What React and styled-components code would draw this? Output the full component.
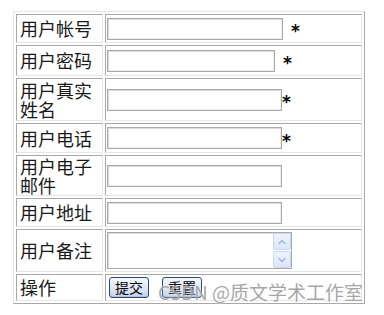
import React from "react";
import styled, { createGlobalStyle } from "styled-components";
import { ChevronUp, ChevronDown } from "lucide-react";

const GlobalStyle = createGlobalStyle`
  html, body { margin: 0; padding: 0; background: #ffffff; }
  * { box-sizing: border-box; }
`;

const Page = styled.div`
  position: relative;
  width: 384px;
  height: 315px;
  padding: 11px 0 0 13px;
  overflow: hidden;
  font-family: "Noto Sans CJK SC", "Noto Sans", sans-serif;
`;

const FormGrid = styled.div`
  display: grid;
  grid-template-columns: 87px 257px;
  grid-template-rows: 29px 31px 43px 30px 41px 29px 43px 27px;
  gap: 2px;
  padding: 2px;
  width: fit-content;
  border: 1px solid;
  border-color: #e6e6e6 #a8a8a8 #a8a8a8 #e6e6e6;
`;

const Cell = styled.div`
  border: 1px solid;
  border-color: #a8a8a8 #e6e6e6 #e6e6e6 #a8a8a8;
  display: flex;
  align-items: center;
`;

const LabelCell = styled(Cell)`
  padding: 0 3px;
  font-size: 18px;
  line-height: 19px;
  color: #1a1a1a;
`;

const FieldCell = styled(Cell)`
  padding-left: 1px;
`;

const TextInput = styled.input`
  width: ${(p) => p.$w}px;
  height: 22px;
  border: 1px solid #a9a9a9;
  box-shadow: inset 1px 1px 0 #dcdcdc, inset -1px -1px 0 #eeeeee;
  background: #fff;
  padding: 0 2px;
  margin: 0;
  outline: none;
`;

const Star = styled.span`
  font-family: "DejaVu Sans", sans-serif;
  font-size: 17px;
  font-weight: bold;
  line-height: 1;
  color: #000;
  margin-left: ${(p) => p.$gap}px;
  transform: translateY(3px);
`;

const TextareaBox = styled.div`
  width: 185px;
  height: 37px;
  border: 1px solid #a9a9a9;
  box-shadow: inset 1px 1px 0 #dcdcdc;
  display: flex;
  background: #fff;
`;

const Memo = styled.textarea`
  flex: 1;
  border: none;
  outline: none;
  resize: none;
  background: transparent;
  overflow: hidden;
  margin: 0;
  padding: 2px;
`;

const ScrollBar = styled.div`
  width: 18px;
  display: flex;
  flex-direction: column;
  gap: 1px;
`;

const ScrollButton = styled.div`
  flex: 1;
  border: 1px solid #c9d7f3;
  border-radius: 2px;
  background: linear-gradient(180deg, #eef3fd 0%, #dbe6fb 100%);
  display: flex;
  align-items: center;
  justify-content: center;
  color: #9fb4dc;
`;

const ButtonRow = styled.div`
  display: flex;
  gap: 13px;
  padding-left: 2px;
`;

const XPButton = styled.button`
  width: 40px;
  height: 21px;
  margin: 0;
  padding: 0;
  border: 1px solid #2a4a7c;
  border-radius: 3px;
  background: linear-gradient(180deg, #f6f8fc 0%, #dfe7f4 55%, #c4d2ea 100%);
  box-shadow: inset 0 -1px 0 #aebfdc;
  font-family: "Noto Sans CJK SC", sans-serif;
  font-size: 14px;
  line-height: 19px;
  color: #000;
`;

const Watermark = styled.div`
  position: absolute;
  left: 158px;
  top: 280px;
  font-family: "Noto Sans CJK SC", sans-serif;
  font-size: 19px;
  line-height: 24px;
  color: rgba(150, 150, 150, 0.85);
  text-shadow: 0 0 2px #ffffff;
  white-space: nowrap;
  pointer-events: none;
`;

const rows = [
  { label: "用户帐号", w: 176, star: 8 },
  { label: "用户密码", w: 168, star: 8, type: "password" },
  { label: "用户真实姓名", w: 175, star: 0 },
  { label: "用户电话", w: 175, star: 0 },
  { label: "用户电子邮件", w: 175 },
  { label: "用户地址", w: 175 },
];

export default function App() {
  return (
    <>
      <GlobalStyle />
      <Page>
        <FormGrid>
          {rows.map((r) => (
            <React.Fragment key={r.label}>
              <LabelCell>{r.label}</LabelCell>
              <FieldCell>
                <TextInput $w={r.w} type={r.type || "text"} />
                {r.star !== undefined && <Star $gap={r.star}>*</Star>}
              </FieldCell>
            </React.Fragment>
          ))}
          <LabelCell>用户备注</LabelCell>
          <FieldCell>
            <TextareaBox>
              <Memo />
              <ScrollBar>
                <ScrollButton>
                  <ChevronUp size={12} strokeWidth={2.5} />
                </ScrollButton>
                <ScrollButton>
                  <ChevronDown size={12} strokeWidth={2.5} />
                </ScrollButton>
              </ScrollBar>
            </TextareaBox>
          </FieldCell>
          <LabelCell>操作</LabelCell>
          <FieldCell>
            <ButtonRow>
              <XPButton>提交</XPButton>
              <XPButton>重置</XPButton>
            </ButtonRow>
          </FieldCell>
        </FormGrid>
        <Watermark>CSDN @质文学术工作室</Watermark>
      </Page>
    </>
  );
}
